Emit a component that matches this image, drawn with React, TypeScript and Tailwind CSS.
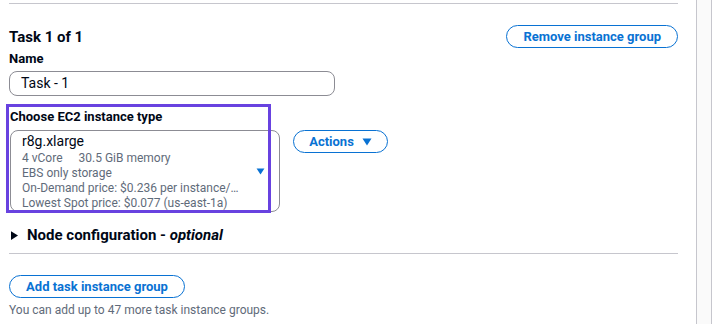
import React from "react";

const Caret = ({ className = "" }: { className?: string }) => (
  <svg viewBox="0 0 10 8" className={className} aria-hidden>
    <path d="M0.5 0.5 H9.5 L5 7.5 Z" fill="currentColor" />
  </svg>
);

export default function App() {
  return (
    <div
      className="flex w-[721px] h-[324px] bg-white text-[#000716] overflow-hidden"
      style={{ fontFamily: 'Roboto, "Noto Sans", sans-serif' }}
    >
      <div className="w-[696px] shrink-0 pl-[9px] pr-[18px] flex flex-col">
        <div className="shrink-0 mt-[3px] h-px bg-[#c6c6cd]" />
        <div className="shrink-0 flex items-start justify-between mt-[21px]">
          <div className="flex flex-col">
            <div className="text-[15px] font-bold leading-[20px] mt-[2px]">Task 1 of 1</div>
            <div className="text-[13px] font-bold leading-[18px] mt-[3px]">Name</div>
          </div>
          <button className="h-[23px] px-[16px] rounded-full border-[1.5px] border-[#0972d3] text-[#0972d3] text-[13px] font-bold leading-none flex items-center">
            Remove instance group
          </button>
        </div>
        <div className="shrink-0 mt-[3px] w-[326px] h-[25px] rounded-[8px] border border-[#8c8c94] flex items-center pl-[11px] text-[14px]">
          Task - 1
        </div>
        <div className="shrink-0 flex items-start mt-[8px] -ml-[3px]">
          <div className="relative w-[273px] shrink-0">
            <div className="pt-[3px] pl-[4px] pb-[4px]">
              <div className="text-[13px] font-bold leading-[18px] mt-[1px]">Choose EC2 instance type</div>
              <div className="mt-[4px] w-[270px] h-[82px] rounded-[8px] border border-[#8c8c94] pl-[11px] pr-[14px] flex items-center">
                <div className="flex-1 min-w-0 flex flex-col">
                  <div className="text-[14px] leading-[18px]">r8g.xlarge</div>
                  <div className="text-[12px] leading-[15px] text-[#5f6b7a] whitespace-nowrap mt-[1px]">
                    4 vCore<span className="inline-block w-[16px]" />30.5 GiB memory
                  </div>
                  <div className="text-[12px] leading-[15px] text-[#5f6b7a] whitespace-nowrap">EBS only storage</div>
                  <div className="text-[12px] leading-[15px] text-[#5f6b7a] whitespace-nowrap">On-Demand price: $0.236 per instance/…</div>
                  <div className="text-[12px] leading-[15px] text-[#5f6b7a] whitespace-nowrap">Lowest Spot price: $0.077 (us-east-1a)</div>
                </div>
                <Caret className="w-[9px] h-[7px] text-[#0972d3] ml-[4px]" />
              </div>
            </div>
            <div className="absolute left-0 top-0 w-[265px] h-[109px] border-[3px] border-[#6842e0] pointer-events-none" />
          </div>
          <button className="mt-[26px] ml-[14px] h-[23px] w-[95px] rounded-full border-[1.5px] border-[#0972d3] text-[#0972d3] text-[13px] font-bold leading-none flex items-center justify-center gap-[8px]">
            Actions
            <Caret className="w-[10px] h-[8px]" />
          </button>
        </div>
        <div className="shrink-0 flex items-center mt-[9px] h-[20px]">
          <svg viewBox="0 0 8 10" className="w-[7px] h-[9px] ml-[2px]" aria-hidden>
            <path d="M0 0 L8 5 L0 10 Z" fill="#000716" />
          </svg>
          <span className="ml-[9px] text-[15px] font-bold leading-[20px]">
            Node configuration - <i>optional</i>
          </span>
        </div>
        <div className="shrink-0 mt-[8px] h-px bg-[#c6c6cd]" />
        <div className="shrink-0 mt-[21px]">
          <button className="h-[23px] w-[176px] rounded-full border-[1.5px] border-[#0972d3] text-[#0972d3] text-[13px] font-bold leading-none flex items-center justify-center">
            Add task instance group
          </button>
        </div>
        <div className="shrink-0 mt-[4px] text-[12px] leading-[16px] text-[#5f6b7a]">
          You can add up to 47 more task instance groups.
        </div>
      </div>
      <div className="w-[16px] shrink-0 bg-[#fafafa] border-x border-[#c6c6cd]" />
      <div className="flex-1 bg-white" />
    </div>
  );
}
